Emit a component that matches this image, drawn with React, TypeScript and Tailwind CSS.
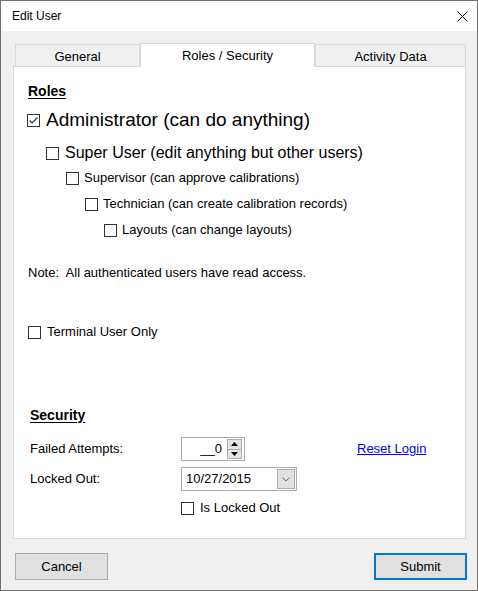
import type { ReactNode } from "react"

function Box({ checked = false }: { checked?: boolean }) {
	return (
		<span className="flex h-[13px] w-[13px] shrink-0 items-center justify-center border border-[#333333] bg-white">
			{checked && (
				<svg width="11" height="11" viewBox="0 0 11 11" fill="none">
					<path d="M1.5 5.5 L4 8 L9.5 2.5" stroke="#333333" strokeWidth="1.2" />
				</svg>
			)}
		</span>
	)
}

function Check({
	label,
	checked = false,
	className = "",
}: {
	label: ReactNode
	checked?: boolean
	className?: string
}) {
	return (
		<div className={`flex items-center ${className}`}>
			<Box checked={checked} />
			<span className="whitespace-nowrap">{label}</span>
		</div>
	)
}

function Tab({ label, selected = false, width }: { label: string; selected?: boolean; width: string }) {
	if (selected) {
		return (
			<div
				className={`relative z-10 -mb-px flex h-[24px] items-center justify-center border border-b-0 border-[#d9d9d9] bg-white ${width}`}
			>
				{label}
			</div>
		)
	}
	return (
		<div
			className={`flex h-[22px] items-center justify-center border border-b-0 border-[#d9d9d9] bg-[#f0f0f0] pt-[3px] ${width}`}
		>
			{label}
		</div>
	)
}

export default function App() {
	return (
		<div className="flex h-[591px] w-[478px] flex-col border border-[#707070] bg-[#f0f0f0] font-['Liberation_Sans',Arial,sans-serif] text-[13px] text-black">
			{/* title bar */}
			<div className="flex h-[30px] shrink-0 items-center justify-between bg-white pl-[11px] pr-[10px]">
				<span className="text-[12px]">Edit User</span>
				<svg width="11" height="11" viewBox="0 0 11 11" className="mr-[-1px]">
					<path d="M0.5 0.5 L10.5 10.5 M10.5 0.5 L0.5 10.5" stroke="#000" strokeWidth="1" />
				</svg>
			</div>

			<div className="ml-[12px] mt-[12px] w-[453px]">
				{/* tabs */}
				<div className="flex items-end pl-[2px]">
					<Tab label="General" width="w-[125px]" />
					<Tab label="Roles / Security" width="w-[175px]" selected />
					<Tab label="Activity Data" width="w-[151px]" />
				</div>

				{/* panel */}
				<div className="flex h-[473px] flex-col border border-[#d9d9d9] bg-white">
					<div className="mt-[16px] ml-[14px] flex h-[16px] items-center text-[14px] font-bold underline underline-offset-2">
						Roles
					</div>

					<Check
						checked
						label="Administrator (can do anything)"
						className="mt-[10px] ml-[13px] h-[22px] gap-[6px] text-[19px]"
					/>
					<Check
						label="Super User (edit anything but other users)"
						className="mt-[12px] ml-[32px] h-[20px] gap-[6px] text-[16px]"
					/>
					<Check
						label="Supervisor (can approve calibrations)"
						className="mt-[7px] ml-[52px] h-[16px] gap-[5px]"
					/>
					<Check
						label="Technician (can create calibration records)"
						className="mt-[10px] ml-[71px] h-[16px] gap-[5px]"
					/>
					<Check
						label="Layouts (can change layouts)"
						className="mt-[10px] ml-[90px] h-[16px] gap-[5px]"
					/>

					<div className="mt-[27px] ml-[14px] flex h-[16px] items-center whitespace-pre">
						Note:  All authenticated users have read access.
					</div>

					<Check label="Terminal User Only" className="mt-[43px] ml-[14px] h-[16px] gap-[6px]" />

					<div className="mt-[67px] ml-[16px] flex h-[16px] items-center text-[14px] font-bold underline underline-offset-2">
						Security
					</div>

					{/* failed attempts */}
					<div className="mt-[14px] ml-[16px] flex h-[24px] items-center">
						<span className="w-[151px]">Failed Attempts:</span>
						<div className="flex h-[24px] w-[64px] items-center border border-[#adadad] bg-white pl-[2px] pr-[2px]">
							<span className="flex-1 pr-[5px] text-right">__0</span>
							<div className="flex h-[20px] w-[15px] flex-col border border-[#adadad]">
								<div className="flex flex-1 items-center justify-center border-b border-[#adadad] bg-[#e5e5e5]">
									<svg width="7" height="4" viewBox="0 0 7 4">
										<path d="M0 4 L3.5 0 L7 4 Z" fill="#000" />
									</svg>
								</div>
								<div className="flex flex-1 items-center justify-center bg-[#e5e5e5]">
									<svg width="7" height="4" viewBox="0 0 7 4">
										<path d="M0 0 L3.5 4 L7 0 Z" fill="#000" />
									</svg>
								</div>
							</div>
						</div>
						<a href="#" className="ml-[112px] text-[#0000ff] underline">
							Reset Login
						</a>
					</div>

					{/* locked out */}
					<div className="mt-[6px] ml-[16px] flex h-[24px] items-center">
						<span className="w-[151px]">Locked Out:</span>
						<div className="flex h-[24px] w-[116px] items-center border border-[#adadad] bg-white pl-[4px] pr-[1px]">
							<span className="flex-1">10/27/2015</span>
							<div className="flex h-[20px] w-[18px] items-center justify-center border border-[#adadad] bg-[#e1e1e1]">
								<svg width="8" height="5" viewBox="0 0 8 5" fill="none">
									<path d="M0.5 0.5 L4 4 L7.5 0.5" stroke="#707070" strokeWidth="1" />
								</svg>
							</div>
						</div>
					</div>

					<Check label="Is Locked Out" className="mt-[9px] ml-[167px] h-[16px] gap-[6px]" />
				</div>
			</div>

			{/* buttons */}
			<div className="mt-[14px] flex justify-between pl-[14px] pr-[10px]">
				<button className="flex h-[27px] w-[93px] items-center justify-center border border-[#adadad] bg-[#e1e1e1]">
					Cancel
				</button>
				<button className="flex h-[27px] w-[93px] items-center justify-center border-2 border-[#0078d7] bg-[#e1e1e1]">
					Submit
				</button>
			</div>
		</div>
	)
}
